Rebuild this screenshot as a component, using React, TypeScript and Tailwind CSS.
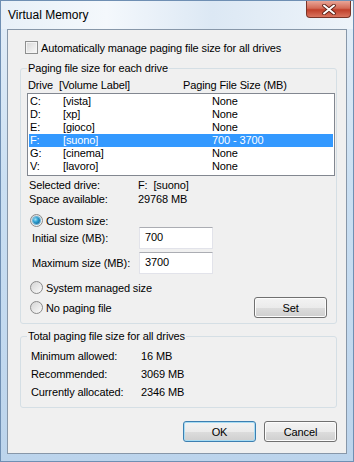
import React from "react";

const DRIVES = [
  { drive: "C:", label: "[vista]", size: "None" },
  { drive: "D:", label: "[xp]", size: "None" },
  { drive: "E:", label: "[gioco]", size: "None" },
  { drive: "F:", label: "[suono]", size: "700 - 3700", selected: true },
  { drive: "G:", label: "[cinema]", size: "None" },
  { drive: "V:", label: "[lavoro]", size: "None" },
];

const TOTALS = [
  { name: "Minimum allowed:", value: "16 MB" },
  { name: "Recommended:", value: "3069 MB" },
  { name: "Currently allocated:", value: "2346 MB" },
];

function Radio({ checked }: { checked?: boolean }) {
  return (
    <span className="flex h-[13px] w-[13px] shrink-0 items-center justify-center rounded-full border border-[#8a8a8a] bg-[linear-gradient(135deg,#d4d4d4,#fbfbfb)]">
      {checked && (
        <span className="h-[7px] w-[7px] rounded-full bg-[radial-gradient(circle_at_35%_35%,#9fe0f7_0%,#2a9fd0_40%,#0b4f80_100%)] shadow-[0_0_0_1px_#6cb4d8]" />
      )}
    </span>
  );
}

function Button({ children, primary }: { children: React.ReactNode; primary?: boolean }) {
  return (
    <div
      className={
        "flex h-[21px] w-[73px] items-center justify-center rounded-[3px] border bg-[linear-gradient(#f3f3f3_0%,#ebebeb_50%,#dddddd_50%,#cfcfcf_100%)] " +
        (primary ? "border-[#3c7fb1] shadow-[inset_0_0_0_1px_#a8dcf3]" : "border-[#707070] shadow-[inset_0_0_0_1px_#fcfcfc]")
      }
    >
      {children}
    </div>
  );
}

export default function App() {
  return (
    <div
      className="flex h-[462px] w-[354px] flex-col overflow-hidden border border-[#6f8fb3] bg-[linear-gradient(180deg,#e4eef8_0%,#cadff2_40%,#bcd4ec_100%)] text-[11px] leading-[14px] tracking-[-0.12px] text-black"
      style={{ fontFamily: '"Liberation Sans", Arial, sans-serif' }}
    >
      {/* ── Title bar ───────────────────────────── */}
      <div className="flex h-[28px] shrink-0 items-start justify-between bg-[linear-gradient(90deg,#e8f0f8_0%,#f4f8fc_30%,#dce8f4_60%,#eef4fa_100%)]">
        <div className="pl-[7px] pt-[7px] text-[12px] tracking-normal">Virtual Memory</div>
        <div className="mr-[2px] flex h-[17px] w-[45px] items-center justify-center rounded-b-[4px] border border-t-0 border-[#7a3428] bg-[linear-gradient(#e9a597_0%,#d36b57_45%,#c0402b_55%,#d9745f_100%)]">
          <svg width="14" height="11" viewBox="0 0 14 11">
            <path d="M2 1.5 L12 9.5 M12 1.5 L2 9.5" stroke="#5a1e14" strokeWidth="3.6" strokeLinecap="round" />
            <path d="M2 1.5 L12 9.5 M12 1.5 L2 9.5" stroke="#ffffff" strokeWidth="2" strokeLinecap="round" />
          </svg>
        </div>
      </div>

      {/* ── Client area ─────────────────────────── */}
      <div className="mx-[6px] flex h-[425px] flex-col border border-[#8797a9] bg-[#f0f0f0]">
        {/* Checkbox */}
        <div className="ml-[17px] mt-[11px] flex h-[13px] items-center gap-[3px]">
          <span className="h-[13px] w-[13px] border border-[#8e8f8f] bg-[linear-gradient(135deg,#d6d6d6,#fafafa)] shadow-[inset_0_0_0_1px_#f4f4f4]" />
          <span>Automatically manage paging file size for all drives</span>
        </div>

        {/* Group 1 */}
        <fieldset className="ml-[12px] mt-[7px] w-[317px] rounded-[3px] border border-[#d5dfe5] pb-[5px] pl-[6px] pr-[1px]">
          <legend className="px-[1px] leading-[14px]">Paging file size for each drive</legend>
          <div className="mt-[3px] flex h-[13px] items-center pl-[1px]">
            <span className="w-[155px]">Drive&nbsp; [Volume Label]</span>
            <span>Paging File Size (MB)</span>
          </div>
          <div className="mt-[2px] h-[83px] w-[308px] border border-[#828790] bg-white px-[1px] pt-[1px]">
            {DRIVES.map((d) => (
              <div
                key={d.drive}
                className={"flex h-[13px] items-center leading-[13px] " + (d.selected ? "bg-[#3399ff] text-white" : "")}
              >
                <span className="w-[34px] pl-[1px]">{d.drive}</span>
                <span className="w-[149px]">{d.label}</span>
                <span>{d.size}</span>
              </div>
            ))}
          </div>

          <div className="mt-[2px] pl-[2px]">
            <div className="flex h-[14px] items-center">
              <span className="w-[109px]">Selected drive:</span>
              <span>F:&nbsp; [suono]</span>
            </div>
            <div className="flex h-[14px] items-center">
              <span className="w-[109px]">Space available:</span>
              <span>29768 MB</span>
            </div>
          </div>

          <div className="ml-[3px] mt-[8px] flex h-[13px] items-center gap-[3px]">
            <Radio checked />
            <span>Custom size:</span>
          </div>

          <div className="flex h-[22px] items-center pl-[5px]">
            <span className="w-[107px] whitespace-nowrap">Initial size (MB):</span>
            <div className="h-[22px] w-[74px] border border-[#e2e3ea] border-t-[#abadb3] bg-white pl-[5px] pt-[2px]">700</div>
          </div>
          <div className="mt-[3px] flex h-[22px] items-center pl-[5px]">
            <span className="w-[107px] whitespace-nowrap">Maximum size (MB):</span>
            <div className="h-[22px] w-[74px] border border-[#e2e3ea] border-t-[#abadb3] bg-white pl-[5px] pt-[2px]">3700</div>
          </div>

          <div className="ml-[3px] mt-[7px] flex h-[13px] items-center gap-[3px]">
            <Radio />
            <span>System managed size</span>
          </div>

          <div className="ml-[3px] mt-[3px] flex h-[21px] items-center justify-between pr-[8px]">
            <div className="flex items-center gap-[3px]">
              <Radio />
              <span>No paging file</span>
            </div>
            <Button>Set</Button>
          </div>
        </fieldset>

        {/* Group 2 */}
        <fieldset className="ml-[12px] mt-[5px] w-[317px] rounded-[3px] border border-[#d5dfe5] pb-[6px] pl-[6px] pr-[1px]">
          <legend className="px-[1px] leading-[14px]">Total paging file size for all drives</legend>
          <div className="pl-[4px] pt-[4px]">
            {TOTALS.map((t) => (
              <div key={t.name} className="flex h-[18px] items-center">
                <span className="w-[110px]">{t.name}</span>
                <span>{t.value}</span>
              </div>
            ))}
          </div>
        </fieldset>

        {/* Buttons */}
        <div className="mr-[9px] mt-[13px] flex justify-end gap-[8px]">
          <Button primary>OK</Button>
          <Button>Cancel</Button>
        </div>
      </div>
    </div>
  );
}
